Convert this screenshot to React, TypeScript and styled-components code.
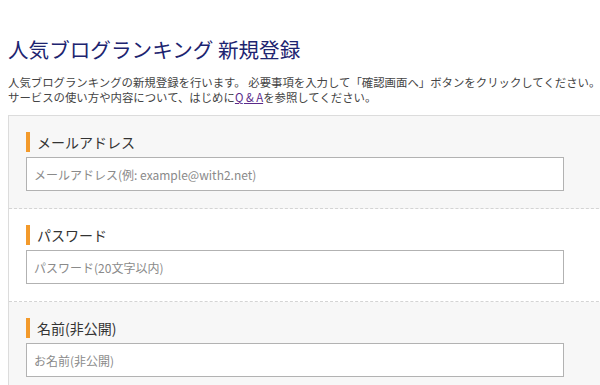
import React from 'react';
import styled, { createGlobalStyle } from 'styled-components';

const Global = createGlobalStyle`
  body {
    margin: 0;
    background: #fff;
    font-family: "Noto Sans CJK JP", "Noto Sans", sans-serif;
    color: #333;
  }
`;

const Page = styled.div`
  width: 600px;
  height: 385px;
  overflow: hidden;
  padding: 34px 0 0 8px;
  box-sizing: border-box;
`;

const Title = styled.h1`
  margin: 0;
  font-size: 20.6px;
  line-height: 30px;
  font-weight: normal;
  color: #1d2470;
`;

const Lead = styled.p`
  margin: 11px 0 0;
  font-size: 11.4px;
  line-height: 15px;
  color: #444;
  white-space: nowrap;
`;

const Link = styled.a`
  color: #5a2a8a;
  text-decoration: underline;
`;

const Form = styled.form`
  margin-top: 10px;
  width: 620px;
  border-top: 1px solid #dcdcdc;
  border-left: 1px solid #dcdcdc;
`;

const Section = styled.div<{ $alt?: boolean }>`
  background: ${p => (p.$alt ? '#f7f7f7' : '#fff')};
  padding: 16px 0 17px 17px;
  border-bottom: 1px dashed #d4d4d4;
  display: flex;
  flex-direction: column;
  gap: 5px;
`;

const Label = styled.label`
  display: block;
  height: 20px;
  line-height: 20px;
  border-left: 4px solid #f39a2b;
  padding-left: 7px;
  font-size: 14px;
  color: #333;
`;

const Input = styled.input`
  width: 538px;
  height: 34px;
  box-sizing: border-box;
  border: 1px solid #b2b2b2;
  background: #fff;
  padding: 0 7px;
  font-family: "Noto Sans CJK JP", "Noto Sans", sans-serif;
  font-size: 12px;
  color: #333;
  outline: none;
  &::placeholder {
    color: #8a8a8a;
  }
`;

const fields = [
  { label: 'メールアドレス', placeholder: 'メールアドレス(例: example@with2.net)', type: 'text', alt: true },
  { label: 'パスワード', placeholder: 'パスワード(20文字以内)', type: 'password', alt: false },
  { label: '名前(非公開)', placeholder: 'お名前(非公開)', type: 'text', alt: true },
];

export default function App(): React.ReactElement {
  return (
    <Page>
      <Global />
      <Title>人気ブログランキング 新規登録</Title>
      <Lead>
        人気ブログランキングの新規登録を行います。 必要事項を入力して「確認画面へ」ボタンをクリックしてください。
        <br />
        サービスの使い方や内容について、はじめに<Link href="#">Q &amp; A</Link>を参照してください。
      </Lead>
      <Form>
        {fields.map(f => (
          <Section key={f.label} $alt={f.alt}>
            <Label>{f.label}</Label>
            <Input type={f.type} placeholder={f.placeholder} />
          </Section>
        ))}
      </Form>
    </Page>
  );
}
